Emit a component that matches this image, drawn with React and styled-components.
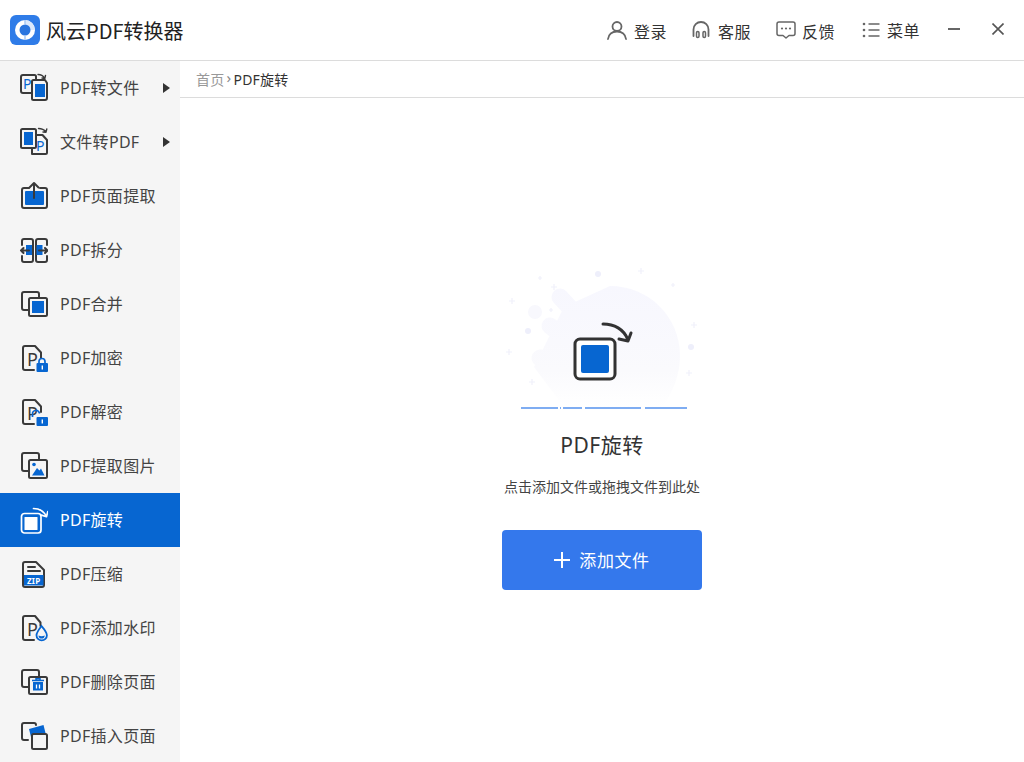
import React, { useState } from 'react';
import styled, { createGlobalStyle } from 'styled-components';

const DARK = '#3a3a3a';
const BLUE = '#0766d1';

const GlobalStyle = createGlobalStyle`
  html, body {
    margin: 0;
    padding: 0;
    height: 100%;
    overflow: hidden;
    background: #fff;
    font-family: "Noto Sans", "Noto Sans CJK SC", sans-serif;
  }
`;

const Page = styled.div`
  width: 1024px;
  height: 762px;
  display: flex;
  flex-direction: column;
  overflow: hidden;
`;

const Header = styled.header`
  height: 60px;
  flex: none;
  display: flex;
  align-items: center;
  border-bottom: 1px solid #dcdcdc;
  padding: 0 20px 0 10px;
`;

const Brand = styled.div`
  display: flex;
  align-items: center;
  gap: 6px;
  font-family: "Noto Sans CJK SC", sans-serif;
  font-size: 20px;
  color: #222;
  flex: 1;
`;

const Actions = styled.div`
  display: flex;
  align-items: center;
  gap: 25px;
`;

const Action = styled.div`
  display: flex;
  align-items: center;
  gap: ${(p) => p.$gap || 7}px;
  margin-left: ${(p) => p.$push || 0}px;
  font-family: "Noto Sans CJK SC", sans-serif;
  font-size: 16px;
  letter-spacing: 0.5px;
  color: #333;
`;

const ActionLabel = styled.span`
  position: relative;
  top: ${(p) => (p.$raised ? 0 : 1)}px;
`;

const WindowControls = styled.div`
  display: flex;
  align-items: center;
  gap: 32px;
  margin-left: 28px;
  margin-top: -2px;
`;

const Body = styled.div`
  flex: 1;
  display: flex;
  min-height: 0;
`;

const Sidebar = styled.nav`
  width: 180px;
  flex: none;
  background: #f5f5f5;
`;

const MenuItem = styled.div`
  height: 54px;
  display: flex;
  align-items: center;
  padding-left: 18px;
  gap: 12px;
  font-size: 16px;
  letter-spacing: 0.3px;
  color: ${(p) => (p.$active ? '#fff' : '#444')};
  background: ${(p) => (p.$active ? BLUE : 'transparent')};
`;

const MenuLabel = styled.span`
  flex: 1;
  margin-top: -2px;
`;

const Caret = styled.span`
  width: 0;
  height: 0;
  margin: -1px 10px 0 0;
  border-left: 7px solid #333;
  border-top: 5px solid transparent;
  border-bottom: 5px solid transparent;
`;

const Main = styled.main`
  flex: 1;
  display: flex;
  flex-direction: column;
  min-width: 0;
`;

const Breadcrumb = styled.div`
  height: 36px;
  flex: none;
  display: flex;
  align-items: center;
  padding-left: 16px;
  border-bottom: 1px solid #dcdcdc;
  font-size: 14px;
  letter-spacing: 0.25px;
  color: #333;
`;

const CrumbHome = styled.span`
  color: #999;
`;

const CrumbSep = styled.span`
  color: #888;
  font-size: 15px;
  margin: -4px 2px 0;
`;

const Center = styled.div`
  flex: 1;
  display: flex;
  flex-direction: column;
  align-items: center;
  padding-top: 157px;
`;

const Title = styled.h1`
  margin: 9px 0 0;
  font-size: 21px;
  line-height: 32px;
  font-weight: 400;
  letter-spacing: 0.5px;
  color: #333;
`;

const Hint = styled.p`
  margin: 16px 0 0;
  font-size: 14px;
  line-height: 20px;
  color: #444;
`;

const AddButton = styled.button`
  margin-top: 33px;
  width: 200px;
  height: 60px;
  border: 0;
  border-radius: 4px;
  background: #3478ec;
  color: #fff;
  display: flex;
  align-items: center;
  justify-content: center;
  gap: 9px;
  font-family: inherit;
  font-size: 17px;
  letter-spacing: 0.6px;
`;

const ButtonLabel = styled.span`
  margin-top: -2px;
`;

const Logo = () => (
  <svg width="30" height="30" viewBox="0 0 30 30">
    <rect width="30" height="30" rx="6" fill="#2f7ce8" />
    <circle cx="15" cy="15" r="10" fill="#fff" />
    <path d="M15 5a10 10 0 0 1 10 10h-5a5 5 0 0 0-5-5z" fill="#dbe8fb" />
    <path d="M15 5v4M15 21v4" stroke="#a9c9f5" strokeWidth="1.500" />
    <circle cx="15" cy="15" r="5.500" fill="#2a75df" />
  </svg>
);

const line = { fill: 'none', stroke: DARK, strokeWidth: 2, strokeLinecap: 'round', strokeLinejoin: 'round' };

const Glyph = ({ children }) => (
  <svg width="30" height="30" viewBox="0 0 30 30" style={{ flex: 'none' }}>
    {children}
  </svg>
);

const PdfToFile = () => (
  <Glyph>
    <path d="M14 20H5a2 2 0 0 1-2-2V4a2 2 0 0 1 2-2h11.500a1.500 1.500 0 0 1 1.500 1.500V7" {...line} />
    <text x="5" y="15.500" fontSize="14" fontFamily="Noto Sans" fill={BLUE}>P</text>
    <path d="M14 10v15.500a1.500 1.500 0 0 0 1.500 1.500H27a2 2 0 0 0 2-2V10l-2-3H15.500A1.500 1.500 0 0 0 14 8.500z" {...line} />
    <rect x="17" y="11" width="10" height="13" fill={BLUE} />
    <path d="M20 1.500c3 0 5 1 6.500 3.500M27.500 2.500 26.800 5.500 24 5" {...line} strokeWidth="1.400" />
  </Glyph>
);

const FileToPdf = () => (
  <Glyph>
    <path d="M14 27.000V20M14 27h13.500a1.500 1.500 0 0 0 1.500-1.500V13l-4.500-5H19" {...line} />
    <rect x="3" y="2" width="15" height="19" rx="1.500" fill="#f5f5f5" stroke={DARK} strokeWidth="2" />
    <rect x="6" y="5" width="9" height="13" fill={BLUE} />
    <path d="M20.500 1.500c3 0 5.500 1 7.500 3.500M28.800 2 28 5.200 25 5" {...line} strokeWidth="1.400" />
    <text x="18" y="24" fontSize="14" fontFamily="Noto Sans" fill={BLUE}>P</text>
  </Glyph>
);

const Extract = () => (
  <Glyph>
    <path d="M11 7H6a2 2 0 0 0-2 2v16a2 2 0 0 0 2 2h21a2 2 0 0 0 2-2V9a2 2 0 0 0-2-2h-5" {...line} />
    <rect x="7" y="10" width="19" height="14" rx="1" fill={BLUE} />
    <path d="M16 17V2.500M11.500 6.500 16 2l4.500 4.500" {...line} />
  </Glyph>
);

const Split = () => (
  <Glyph>
    <path d="M4 10V6a2 2 0 0 1 2-2h7a2 2 0 0 1 2 2v19a2 2 0 0 1-2 2H6a2 2 0 0 1-2-2v-4" {...line} />
    <path d="M29 10V6a2 2 0 0 0-2-2h-7a2 2 0 0 0-2 2v19a2 2 0 0 0 2 2h7a2 2 0 0 0 2-2v-4" {...line} />
    <rect x="8" y="10" width="6" height="10" fill={BLUE} />
    <rect x="18.500" y="10" width="6" height="10" fill={BLUE} />
    <path d="M3 15.500h8M5.500 13 3 15.500 5.500 18M21 15.500h8.500M27 13l2.500 2.500L27 18" {...line} />
  </Glyph>
);

const Merge = () => (
  <Glyph>
    <path d="M10 21H6a2 2 0 0 1-2-2V5a2 2 0 0 1 2-2h13a2 2 0 0 1 2 2v4" {...line} />
    <rect x="11" y="9" width="18" height="18" rx="1.500" {...line} />
    <rect x="14" y="12" width="12" height="12" fill={BLUE} />
  </Glyph>
);

const LockFile = ({ open }) => (
  <Glyph>
    <path d="M16 27H7a2 2 0 0 1-2-2V5a2 2 0 0 1 2-2h10l6 6.500V15" {...line} />
    <text x="9" y="22.500" fontSize="18" fontFamily="Noto Sans" fill={DARK}>P</text>
    <path d={open ? 'M14.500 20v-2.500a3.500 3.500 0 0 1 7-1' : 'M21 22v-3.500a3 3 0 0 1 6 0V22'} fill="none" stroke={BLUE} strokeWidth="1.700" />
    <rect x="18.500" y="20" width="11.500" height="9" rx="1" fill={BLUE} />
    <rect x="23.600" y="22.500" width="1.400" height="4" fill="#fff" />
  </Glyph>
);

const ExtractImage = () => (
  <Glyph>
    <path d="M10 20H6a2 2 0 0 1-2-2V4a2 2 0 0 1 2-2h13a2 2 0 0 1 2 2v4" {...line} />
    <rect x="11" y="9" width="18" height="18" rx="1.500" {...line} />
    <circle cx="16" cy="13.500" r="1.800" fill={BLUE} />
    <path d="M14 24.500 19 17l2.500 2.500 1.500-2 3.500 7z" fill={BLUE} />
  </Glyph>
);

const Rotate = () => (
  <Glyph>
    <rect x="3.500" y="8.500" width="19.500" height="19.500" rx="3" fill="none" stroke="#fff" strokeWidth="1.700" />
    <rect x="6.500" y="12" width="13" height="13" rx="0.500" fill="#fff" />
    <path d="M15.500 3.500c6 0 10.500 3 13 8.200M29.800 6.700l-1.300 5-5-1.600" fill="none" stroke="#fff" strokeWidth="1.700" strokeLinecap="round" strokeLinejoin="round" />
  </Glyph>
);

const Zip = () => (
  <Glyph>
    <path d="M5 16V5a2 2 0 0 1 2-2h11l8 8v15a2 2 0 0 1-2 2H7a2 2 0 0 1-2-2z" {...line} />
    <path d="M10 8h7M10 12h12" {...line} />
    <rect x="6" y="16" width="19.500" height="10.500" fill={BLUE} />
    <text x="15.700" y="24.500" textAnchor="middle" fontSize="8" fontWeight="700" fontFamily="Noto Sans" fill="#fff">ZIP</text>
  </Glyph>
);

const Watermark = () => (
  <Glyph>
    <path d="M16 27H7a2 2 0 0 1-2-2V5a2 2 0 0 1 2-2h10l5.500 6.500V13" {...line} />
    <text x="9" y="22.500" fontSize="18" fontFamily="Noto Sans" fill={DARK}>P</text>
    <path d="M23.500 13c-2.800 3.600-5 6.300-5 9.200a5.200 5.200 0 0 0 10.400 0c0-2.900-2.400-5.600-5.400-9.200z" fill="#f5f5f5" stroke={BLUE} strokeWidth="1.800" />
    <path d="M20.500 22.500c2 1 4.200 1 6.200 0a3.100 3.100 0 0 1-6.200 0z" fill={BLUE} />
  </Glyph>
);

const Trash = () => (
  <Glyph>
    <path d="M10 20H6a2 2 0 0 1-2-2V5a2 2 0 0 1 2-2h13a2 2 0 0 1 2 2v4" {...line} />
    <rect x="11" y="10" width="18" height="17" rx="1.500" fill="#f5f5f5" stroke={DARK} strokeWidth="2" />
    <path d="M14 13.500h12M18 13.500v-1.800h4v1.800" fill="none" stroke={BLUE} strokeWidth="1.500" />
    <path d="M15 15h10v8.500H15z" fill={BLUE} />
    <path d="M18.500 17.500v4M21.500 17.500v4" stroke="#fff" strokeWidth="1.300" />
  </Glyph>
);

const Insert = () => (
  <Glyph>
    <path d="M10 19H6a2 2 0 0 1-2-2V4a2 2 0 0 1 2-2h10a2 2 0 0 1 2 2" {...line} />
    <path d="M11 8l14.500-4 2.500 10-15 2z" fill={BLUE} />
    <rect x="14" y="13" width="15" height="15" rx="1.500" fill="#f5f5f5" stroke={DARK} strokeWidth="2" />
  </Glyph>
);

const items = [
  { label: 'PDF转文件', icon: <PdfToFile />, sub: true },
  { label: '文件转PDF', icon: <FileToPdf />, sub: true },
  { label: 'PDF页面提取', icon: <Extract /> },
  { label: 'PDF拆分', icon: <Split /> },
  { label: 'PDF合并', icon: <Merge /> },
  { label: 'PDF加密', icon: <LockFile /> },
  { label: 'PDF解密', icon: <LockFile open /> },
  { label: 'PDF提取图片', icon: <ExtractImage /> },
  { label: 'PDF旋转', icon: <Rotate /> },
  { label: 'PDF压缩', icon: <Zip /> },
  { label: 'PDF添加水印', icon: <Watermark /> },
  { label: 'PDF删除页面', icon: <Trash /> },
  { label: 'PDF插入页面', icon: <Insert /> },
];

const grey = { fill: 'none', stroke: '#666', strokeWidth: 1.800, strokeLinecap: 'round', strokeLinejoin: 'round' };

const UserIcon = () => (
  <svg width="20" height="20" viewBox="0 0 20 20">
    <circle cx="10" cy="6.500" r="4.500" {...grey} />
    <path d="M1 19c.5-4.500 4-7.500 9-7.500s8.500 3 9 7.500" {...grey} />
  </svg>
);

const HeadsetIcon = () => (
  <svg width="18" height="20" viewBox="0 0 18 20">
    <path d="M1.500 16v-6.500a7.500 7.500 0 0 1 15 0V16" {...grey} />
    <rect x="4.500" y="11.500" width="2.500" height="6" rx="1.200" {...grey} strokeWidth="1.500" />
    <rect x="11" y="11.500" width="2.500" height="6" rx="1.200" {...grey} strokeWidth="1.500" />
  </svg>
);

const ChatIcon = () => (
  <svg width="20" height="20" viewBox="0 0 20 20">
    <path d="M3 2h14a2 2 0 0 1 2 2v9.500a2 2 0 0 1-2 2h-4L10 18l-3-2.500H3a2 2 0 0 1-2-2V4a2 2 0 0 1 2-2z" {...grey} strokeWidth="1.500" />
    <circle cx="6" cy="8.500" r="1.100" fill="#666" />
    <circle cx="10" cy="8.500" r="1.100" fill="#666" />
    <circle cx="14" cy="8.500" r="1.100" fill="#666" />
  </svg>
);

const ListIcon = () => (
  <svg width="18" height="18" viewBox="0 0 18 18">
    <circle cx="2" cy="3" r="1.300" fill="#666" />
    <circle cx="2" cy="9" r="1.300" fill="#666" />
    <circle cx="2" cy="15" r="1.300" fill="#666" />
    <path d="M6.500 3H17.500M6.500 9H17.500M6.500 15H17.500" stroke="#666" strokeWidth="1.600" />
  </svg>
);

const MinIcon = () => (
  <svg width="12" height="12" viewBox="0 0 12 12">
    <path d="M0 6h12" stroke="#555" strokeWidth="1.800" />
  </svg>
);

const CloseIcon = () => (
  <svg width="12" height="12" viewBox="0 0 12 12">
    <path d="M.5.500l11 11M11.500.500l-11 11" stroke="#555" strokeWidth="1.600" />
  </svg>
);

const Sparkle = ({ x, y, s = 3 }) => (
  <path d={`M${x - s} ${y}h${s * 2}M${x} ${y - s}v${s * 2}`} stroke="#f0f1fb" strokeWidth="1.200" />
);

const Illustration = () => (
  <svg width="220" height="165" viewBox="2 0 220 165" style={{ flex: 'none' }}>
    <defs>
      <linearGradient id="blob" gradientUnits="userSpaceOnUse" x1="0" y1="31" x2="0" y2="152">
        <stop offset="0" stopColor="#f7f7fe" />
        <stop offset="0.7" stopColor="#fafafd" />
        <stop offset="1" stopColor="#ffffff" />
      </linearGradient>
    </defs>
    <path
      d="M120 31c39 0 70 31 70 70 0 20-8 36-17 51H74L44 112l30-60z"
      fill="url(#blob)"
    />
    <path
      d="M70 42 92 66M60 71 88 92M50 103 82 108"
      fill="none"
      stroke="url(#blob)"
      strokeWidth="17"
      strokeLinecap="round"
    />
    <circle cx="45" cy="57" r="7" fill="#f8f8fd" />
    <circle cx="108" cy="19" r="3" fill="#eeeffb" />
    <circle cx="38" cy="76" r="3" fill="#eeeffb" />
    <circle cx="201" cy="92" r="3" fill="#eeeffb" />
    <Sparkle x={151} y={16} />
    <Sparkle x={50} y={23} s={2} />
    <Sparkle x={64} y={32} />
    <Sparkle x={22} y={46} />
    <Sparkle x={183} y={30} s={2} />
    <Sparkle x={204} y={70} />
    <Sparkle x={19} y={97} />
    <Sparkle x={42} y={127} />
    <Sparkle x={199} y={118} />
    <Sparkle x={61} y={55} s={2} />
    <rect x="85" y="84" width="40" height="40" rx="5" fill="#fff" stroke="#333" strokeWidth="3" />
    <rect x="91" y="90" width="28" height="28" rx="2" fill={BLUE} />
    <path d="M113 69c11 0 21 5 25 16M141 78l-3 8-9-2" fill="none" stroke="#333" strokeWidth="3" strokeLinecap="round" strokeLinejoin="round" />
    <path d="M31 153h37M70 153h1M73 153h19M95 153h56M155 153h42" stroke="#7fadf2" strokeWidth="2" />
  </svg>
);

const PlusIcon = () => (
  <svg width="16" height="16" viewBox="0 0 16 16">
    <path d="M8 0v16M0 8h16" stroke="#fff" strokeWidth="2" />
  </svg>
);

export default function App() {
  const [active, setActive] = useState('PDF旋转');

  return (
    <Page>
      <GlobalStyle />
      <Header>
        <Brand>
          <Logo />
          风云PDF转换器
        </Brand>
        <Actions>
          <Action><UserIcon /><ActionLabel>登录</ActionLabel></Action>
          <Action $gap={8}><HeadsetIcon /><ActionLabel>客服</ActionLabel></Action>
          <Action $gap={6}><ChatIcon /><ActionLabel>反馈</ActionLabel></Action>
          <Action $gap={7} $push={2}><ListIcon /><ActionLabel $raised>菜单</ActionLabel></Action>
        </Actions>
        <WindowControls>
          <MinIcon />
          <CloseIcon />
        </WindowControls>
      </Header>
      <Body>
        <Sidebar>
          {items.map((item) => (
            <MenuItem key={item.label} $active={item.label === active} onClick={() => setActive(item.label)}>
              {item.icon}
              <MenuLabel>{item.label}</MenuLabel>
              {item.sub && <Caret />}
            </MenuItem>
          ))}
        </Sidebar>
        <Main>
          <Breadcrumb>
            <CrumbHome>首页</CrumbHome>
            <CrumbSep>›</CrumbSep>
            PDF旋转
          </Breadcrumb>
          <Center>
            <Illustration />
            <Title>PDF旋转</Title>
            <Hint>点击添加文件或拖拽文件到此处</Hint>
            <AddButton>
              <PlusIcon />
              <ButtonLabel>添加文件</ButtonLabel>
            </AddButton>
          </Center>
        </Main>
      </Body>
    </Page>
  );
}
